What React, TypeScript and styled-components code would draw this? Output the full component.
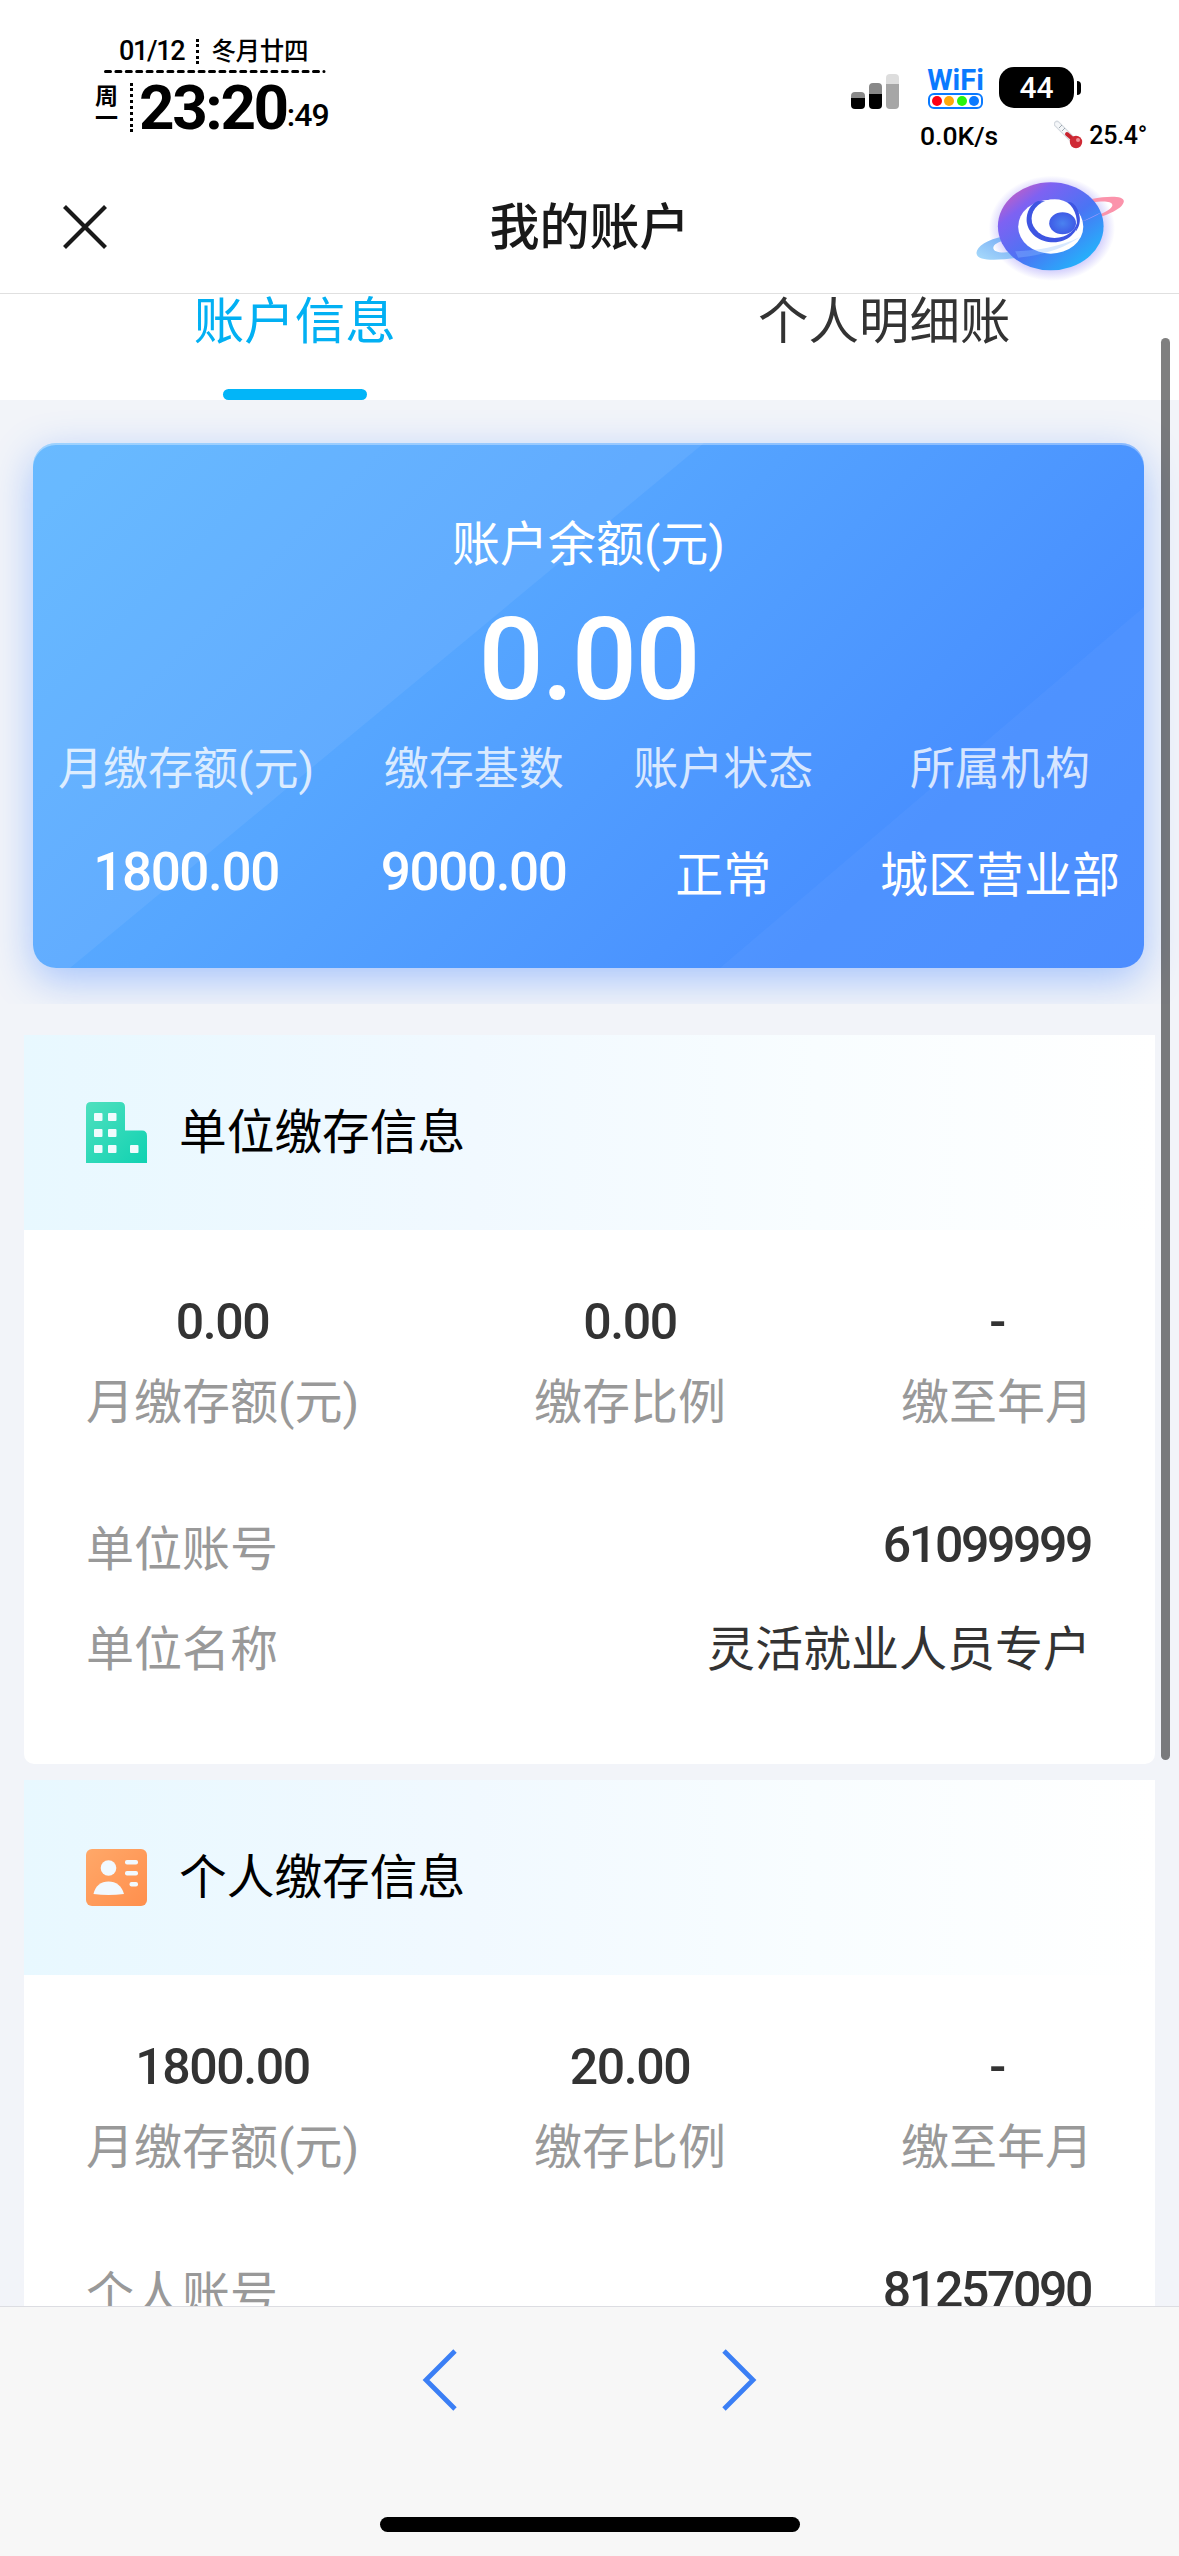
import React from 'react';
import styled, { createGlobalStyle } from 'styled-components';

const GlobalStyle = createGlobalStyle`
  *, *::before, *::after { box-sizing: border-box; }
  body { margin: 0; background: #f2f4f9; }
`;

const Page = styled.div`
  width: 1179px;
  height: 2556px;
  display: flex;
  flex-direction: column;
  overflow: hidden;
  background: #f2f4f9;
  color: #333;
  font-family: Roboto, 'Noto Sans CJK SC', sans-serif;
  white-space: nowrap;
`;

/* ---------- status bar ---------- */

const StatusBar = styled.div`
  flex: none;
  height: 160px;
  display: flex;
  justify-content: space-between;
  align-items: flex-start;
  padding: 37px 32px 0 95px;
  background: #fff;
  color: #000;
  font-weight: 500;
`;

const ClockBlock = styled.div`
  display: flex;
  flex-direction: column;
`;

const DateRow = styled.div`
  display: flex;
  align-items: center;
  gap: 12px;
  height: 28px;
  padding-left: 24px;
  font-size: 27px;
  letter-spacing: -1.3px;
`;

const Lunar = styled.span`
  font-size: 24.5px;
  line-height: 28px;
  letter-spacing: -0.3px;
  padding-top: 1px;
`;

const DottedRule = styled.i<{ $height: number }>`
  width: 0;
  height: ${(p) => p.$height}px;
  border-left: 3px dotted #000;
`;

const DashedRule = styled.svg`
  display: block;
  width: 222px;
  height: 3px;
  margin: 5px 0 0 9px;
`;

const TimeRow = styled.div`
  display: flex;
  align-items: center;
  margin-top: 9px;
  height: 50px;
`;

const Weekday = styled.div`
  width: 23px;
  margin: 2px 12px 0 0;
  font-size: 23px;
  line-height: 22px;
  font-weight: 700;
  white-space: normal;
`;

const Time = styled.span`
  margin-left: 6px;
  font-size: 62px;
  line-height: 50px;
  padding-top: 2px;
  font-weight: 700;
  letter-spacing: -2.4px;
`;

const Seconds = styled.span`
  align-self: flex-end;
  font-size: 32px;
  line-height: 34px;
  letter-spacing: -0.9px;
`;

const Indicators = styled.div`
  display: flex;
  flex-direction: column;
  width: 296px;
  padding-top: 30px;
`;

const IndicatorRow = styled.div`
  display: flex;
  align-items: flex-end;
  height: 42px;
`;

const SignalIcon = styled.svg`
  display: block;
  width: 49px;
  height: 35px;
  margin-right: 28px;
`;

const WifiBadge = styled.div`
  display: flex;
  flex-direction: column;
  align-items: center;
  width: 55px;
  color: #0a7aff;
  font-size: 29px;
  line-height: 26px;
  font-weight: 700;
`;

const WifiDots = styled.div`
  display: flex;
  align-items: center;
  justify-content: space-evenly;
  width: 55px;
  height: 16px;
  border: 2px solid #0a7aff;
  border-radius: 6px;
`;

const Dot = styled.i<{ $color: string }>`
  width: 10px;
  height: 10px;
  border-radius: 50%;
  background: ${(p) => p.$color};
`;

const Battery = styled.div`
  display: flex;
  align-items: center;
  justify-content: center;
  width: 75px;
  height: 41px;
  margin: 0 3px 1px 16px;
  border-radius: 15px;
  background: #000;
  color: #fff;
  font-size: 30px;
`;

const BatteryTip = styled.i`
  width: 4px;
  height: 14px;
  margin-bottom: 14px;
  border-radius: 0 4px 4px 0;
  background: #000;
`;

const ReadoutRow = styled.div`
  display: flex;
  align-items: center;
  justify-content: space-between;
  height: 30px;
  margin-top: 11px;
  padding-left: 69px;
  font-size: 26.5px;
`;

const Temperature = styled.span`
  display: flex;
  align-items: center;
  gap: 5px;
  font-size: 25px;
  letter-spacing: -0.3px;
`;

/* ---------- navigation bar ---------- */

const NavBar = styled.header`
  flex: none;
  display: grid;
  grid-template-columns: 300px 1fr 300px;
  align-items: center;
  height: 134px;
  border-bottom: 1px solid #e0e0e0;
  background: #fff;
`;

const CloseButton = styled.button`
  display: flex;
  width: 46px;
  height: 46px;
  margin: 0 0 0 62px;
  padding: 0;
  border: 0;
  background: none;
`;

const NavTitle = styled.h1`
  margin: 2px 0 0;
  text-align: center;
  color: #191919;
  font-size: 50px;
  line-height: 60px;
  font-weight: 500;
`;

const PlanetLogo = styled.svg`
  justify-self: end;
  width: 157px;
  height: 110px;
  margin: 2px 49px 0 0;
`;

/* ---------- scrolling content ---------- */

const Content = styled.main`
  flex: 1;
  min-height: 0;
  position: relative;
  overflow: hidden;
`;

const Tabs = styled.nav`
  display: grid;
  grid-template-columns: 1fr 1fr;
  height: 106px;
  background: #fff;
`;

const Tab = styled.div<{ $active?: boolean }>`
  display: flex;
  flex-direction: column;
  align-items: center;
  justify-content: space-between;
  color: ${(p) => (p.$active ? '#02b0f3' : '#333')};
  font-size: 50.5px;
  line-height: 55px;

  &::after {
    content: '';
    width: 144px;
    height: 11px;
    border-radius: 6px;
    background: ${(p) => (p.$active ? '#02b5f8' : 'transparent')};
  }
`;

const CardStage = styled.section`
  height: 604px;
  padding: 43px 35px 0 33px;
  overflow: hidden;
`;

const BalanceCard = styled.div`
  position: relative;
  display: flex;
  flex-direction: column;
  align-items: center;
  height: 525px;
  padding-top: 74px;
  border-radius: 23px;
  background: linear-gradient(135deg, #5fb6ff 0%, #56a6ff 38%, #488fff 78%, #4689ff 100%);
  box-shadow: 0 12px 40px rgba(60, 128, 255, 0.42), inset 0 2px 0 rgba(255, 255, 255, 0.35);
  color: #fff;

  &::before,
  &::after {
    content: '';
    position: absolute;
    inset: 0;
    border-radius: 23px;
    background: rgba(255, 255, 255, 0.065);
    clip-path: polygon(0 0, 671px 0, 37px 525px, 0 525px);
  }
  &::after {
    background: rgba(255, 255, 255, 0.035);
    clip-path: polygon(100% 164px, 100% 100%, 687px 100%);
  }
`;

const BalanceLabel = styled.div`
  font-size: 48px;
  line-height: 56px;
`;

const BalanceValue = styled.div`
  margin-top: 32px;
  font-size: 115px;
  line-height: 110px;
  font-weight: 500;
  letter-spacing: -2px;
`;

const Facts = styled.div`
  display: flex;
  justify-content: space-between;
  align-self: stretch;
  margin-top: 27px;
  padding: 0 24px 0 25px;
`;

const Fact = styled.div`
  display: flex;
  flex-direction: column;
  align-items: center;
`;

const FactLabel = styled.span`
  font-size: 45px;
  line-height: 56px;
  opacity: 0.78;
`;

const FactValue = styled.span<{ $numeric?: boolean }>`
  margin-top: ${(p) => (p.$numeric ? 44 : 48)}px;
  font-size: ${(p) => (p.$numeric ? 53 : 48)}px;
  line-height: 60px;
  font-weight: ${(p) => (p.$numeric ? 500 : 400)};
  letter-spacing: ${(p) => (p.$numeric ? -1.4 : 0)}px;
`;

const Section = styled.section`
  width: 1131px;
  height: 729px;
  margin: 31px 0 0 24px;
  border-radius: 0 0 10px 10px;
  overflow: hidden;
  background: #fff;

  & + & {
    margin-top: 16px;
  }
`;

const SectionHeader = styled.div`
  display: flex;
  align-items: center;
  gap: 32px;
  height: 195px;
  padding-left: 62px;
  background: linear-gradient(90deg, #e8f8ff 0%, #f1f9ff 40%, #f8fdff 70%, #fff 100%);
`;

const SectionIcon = styled.svg`
  width: 61px;
  height: 62px;
`;

const SectionTitle = styled.h2`
  margin: 0;
  color: #000;
  font-size: 47.7px;
  line-height: 60px;
  font-weight: 400;
`;

const Stats = styled.div`
  display: flex;
  justify-content: space-between;
  padding: 62px 62px 0;
`;

const Stat = styled.div`
  display: flex;
  flex-direction: column;
  align-items: center;
`;

const StatValue = styled.span`
  color: #333;
  font-size: 50px;
  line-height: 60px;
  font-weight: 500;
  letter-spacing: -1.4px;
`;

const Caption = styled.span`
  color: #999;
  font-size: 48px;
  line-height: 60px;
`;

const StatCaption = styled(Caption)`
  margin-top: 21px;
`;

const Details = styled.dl`
  margin: 87px 64px 0 62px;
`;

const DetailRow = styled.div`
  display: flex;
  justify-content: space-between;
  height: 100px;
`;

const DetailValue = styled.span<{ $numeric?: boolean }>`
  font-size: ${(p) => (p.$numeric ? 50 : 48)}px;
  line-height: ${(p) => (p.$numeric ? 50 : 60)}px;
  font-weight: ${(p) => (p.$numeric ? 500 : 400)};
  letter-spacing: ${(p) => (p.$numeric ? -2.4 : 0)}px;
`;

const ScrollThumb = styled.div`
  position: absolute;
  top: 44px;
  right: 9px;
  width: 9px;
  height: 1422px;
  border-radius: 5px;
  background: rgba(0, 0, 0, 0.5);
`;

/* ---------- browser toolbar ---------- */

const Toolbar = styled.footer`
  flex: none;
  display: flex;
  flex-direction: column;
  align-items: center;
  justify-content: space-between;
  height: 250px;
  padding: 42px 0 24px;
  border-top: 1px solid #dcdde2;
  background: #f7f7f7;
`;

const Arrows = styled.div`
  display: flex;
  gap: 262px;
`;

const Arrow = styled.svg`
  width: 38px;
  height: 62px;
`;

const HomeIndicator = styled.div`
  width: 420px;
  height: 15px;
  border-radius: 8px;
  background: #000;
`;

const Planet = () => (
  <PlanetLogo viewBox="1030 70 410 330" preserveAspectRatio="none">
    <defs>
      <linearGradient id="body" x1="0.1" y1="0.1" x2="0.85" y2="0.9">
        <stop offset="0" stopColor="#c35fc4" />
        <stop offset="0.2" stopColor="#7e62f2" />
        <stop offset="0.58" stopColor="#4a74f4" />
        <stop offset="1" stopColor="#23b4fb" />
      </linearGradient>
      <linearGradient id="ringLeft" x1="1" y1="0" x2="0" y2="1">
        <stop offset="0" stopColor="#6fa4f4" />
        <stop offset="1" stopColor="#a9dcfb" />
      </linearGradient>
      <radialGradient id="core">
        <stop offset="0" stopColor="#4a82f0" />
        <stop offset="1" stopColor="#3f5be6" />
      </radialGradient>
      <radialGradient id="glow">
        <stop offset="0.8" stopColor="#6a5cf5" stopOpacity="0.28" />
        <stop offset="1" stopColor="#6a5cf5" stopOpacity="0" />
      </radialGradient>
    </defs>
    <ellipse cx="1236" cy="236" rx="165" ry="158" fill="url(#glow)" />
    <path
      d="M1110 260 C1068 270 1040 290 1039 310 C1040 334 1085 334 1150 324 L1140 305 C1105 312 1083 308 1083 294 C1084 284 1096 278 1112 272 Z"
      fill="url(#ringLeft)"
    />
    <path
      d="M1340 148 C1385 138 1424 138 1424 155 C1422 180 1370 204 1310 217 C1360 198 1394 180 1394 166 C1392 154 1370 154 1342 158 Z"
      fill="#fb93ab"
    />
    <ellipse cx="1233" cy="230" rx="138" ry="132" fill="url(#body)" />
    <ellipse cx="1233" cy="231" rx="85" ry="81" fill="#fff" />
    <path
      d="M1200 154 C1180 162 1169 188 1170 214 C1173 252 1204 278 1240 278 C1278 277 1304 248 1307 210 C1308 186 1300 166 1286 158 Z"
      fill="#3e55e2"
    />
    <ellipse cx="1243" cy="207" rx="60" ry="58" fill="#fff" />
    <path d="M1276 156 C1312 172 1318 218 1298 246 C1306 214 1300 180 1276 156 Z" fill="#3e55e2" />
    <ellipse cx="1264" cy="221" rx="35" ry="33" fill="url(#core)" />
    <path d="M1140 305 C1200 302 1255 292 1310 262 C1262 300 1205 318 1148 324 Z" fill="#8fc0ff" opacity="0.35" />
    <path d="M1368 186 C1350 200 1330 210 1310 217 C1330 208 1350 196 1368 186 Z" fill="#b99cff" opacity="0.8" />
  </PlanetLogo>
);

const BuildingIcon = () => (
  <SectionIcon viewBox="0 0 61 62">
    <defs>
      <linearGradient id="green" x1="0" y1="0" x2="1" y2="1">
        <stop offset="0" stopColor="#4fe0be" />
        <stop offset="1" stopColor="#10d2b2" />
      </linearGradient>
    </defs>
    <path d="M0 61 V5 Q0 0 5 0 H34 Q39 0 39 5 V28.5 H56 Q61 28.5 61 34 V61 Z" fill="url(#green)" />
    {[
      [8, 11],
      [22, 11],
      [8, 27],
      [22, 27],
      [8, 43],
      [22, 43],
      [44, 43],
    ].map(([x, y]) => (
      <rect key={`${x}-${y}`} x={x} y={y} width="8.5" height="8" rx="1" fill="#f0fbfd" />
    ))}
  </SectionIcon>
);

const PersonIcon = () => (
  <SectionIcon viewBox="0 0 61 62">
    <defs>
      <linearGradient id="orange" x1="0" y1="0" x2="1" y2="1">
        <stop offset="0" stopColor="#ffa869" />
        <stop offset="1" stopColor="#ff8f4d" />
      </linearGradient>
    </defs>
    <rect y="2" width="61" height="57" rx="6" fill="url(#orange)" />
    <ellipse cx="22.5" cy="21" rx="7.8" ry="7.8" fill="#f1f9ff" />
    <path d="M7.5 47 C9 39 15 34.5 22.5 34.5 C30 34.5 36 39 38 47 Q30 48 22.5 48 T7.5 47 Z" fill="#f1f9ff" />
    <rect x="39" y="13" width="13" height="4.6" rx="2" fill="#f1f9ff" />
    <rect x="39" y="24" width="13" height="4.6" rx="2" fill="#f1f9ff" />
    <rect x="43.5" y="35" width="8.5" height="4.6" rx="2" fill="#f1f9ff" />
  </SectionIcon>
);

const Thermometer = () => (
  <svg width="30" height="30" viewBox="0 0 30 30">
    <path d="M3 4 L19 20" stroke="#d4d9df" strokeWidth="6.5" strokeLinecap="round" />
    <path d="M3 4 L19 20" stroke="#f5f7f9" strokeWidth="4" strokeLinecap="round" />
    <path d="M5 8 l3 -3 M8 11 l3 -3" stroke="#8a95a0" strokeWidth="0.8" />
    <path d="M13 14 L21 21" stroke="#c8232e" strokeWidth="4" strokeLinecap="round" />
    <circle cx="22" cy="22" r="6.2" fill="#cf2a35" />
    <circle cx="24" cy="20" r="2" fill="#f08f94" />
  </svg>
);

const facts = [
  { label: '月缴存额(元)', value: '1800.00', numeric: true },
  { label: '缴存基数', value: '9000.00', numeric: true },
  { label: '账户状态', value: '正常' },
  { label: '所属机构', value: '城区营业部' },
];

const sections = [
  {
    title: '单位缴存信息',
    Icon: BuildingIcon,
    stats: [
      ['0.00', '月缴存额(元)'],
      ['0.00', '缴存比例'],
      ['-', '缴至年月'],
    ],
    details: [
      { label: '单位账号', value: '61099999', numeric: true },
      { label: '单位名称', value: '灵活就业人员专户' },
    ],
  },
  {
    title: '个人缴存信息',
    Icon: PersonIcon,
    stats: [
      ['1800.00', '月缴存额(元)'],
      ['20.00', '缴存比例'],
      ['-', '缴至年月'],
    ],
    details: [{ label: '个人账号', value: '81257090', numeric: true }],
  },
];

export default function App() {
  return (
    <Page>
      <GlobalStyle />
      <StatusBar>
        <ClockBlock>
          <DateRow>
            <span>01/12</span>
            <DottedRule $height={25} />
            <Lunar>冬月廿四</Lunar>
          </DateRow>
          <DashedRule viewBox="0 0 222 3">
            <path d="M1.5 1.5 H220" stroke="#000" strokeWidth="3" strokeLinecap="round" strokeDasharray="5 5.4" />
          </DashedRule>
          <TimeRow>
            <Weekday>周一</Weekday>
            <DottedRule $height={49} />
            <Time>23:20</Time>
            <Seconds>:49</Seconds>
          </TimeRow>
        </ClockBlock>
        <Indicators>
          <IndicatorRow>
            <SignalIcon viewBox="0 0 49 35">
              <path d="M0 24 V22 Q0 18 4 18 H10 Q14 18 14 22 V24 Z" fill="#888" />
              <path d="M0 24 H14 V31 Q14 35 10 35 H4 Q0 35 0 31 Z" />
              <path d="M18 20 V13 Q18 9 22 9 H27 Q31 9 31 13 V20 Z" fill="#888" />
              <path d="M18 20 H31 V31 Q31 35 27 35 H22 Q18 35 18 31 Z" />
              <path d="M35 10 V4 Q35 0 39 0 H44 Q48 0 48 4 V10 Z" fill="#ddd" />
              <path d="M35 10 H48 V31 Q48 35 44 35 H39 Q35 35 35 31 Z" fill="#a6a6a6" />
            </SignalIcon>
            <WifiBadge>
              WiFi
              <WifiDots>
                <Dot $color="#ff0013" />
                <Dot $color="#ffa90a" />
                <Dot $color="#27f50c" />
                <Dot $color="#0a7aff" />
              </WifiDots>
            </WifiBadge>
            <Battery>44</Battery>
            <BatteryTip />
          </IndicatorRow>
          <ReadoutRow>
            <span>0.0K/s</span>
            <Temperature>
              <Thermometer />
              25.4°
            </Temperature>
          </ReadoutRow>
        </Indicators>
      </StatusBar>

      <NavBar>
        <CloseButton aria-label="关闭">
          <svg width="46" height="46" viewBox="0 0 46 46">
            <path d="M2.5 2.5 L43.5 43.5 M43.5 2.5 L2.5 43.5" stroke="#191919" strokeWidth="4.2" />
          </svg>
        </CloseButton>
        <NavTitle>我的账户</NavTitle>
        <Planet />
      </NavBar>

      <Content>
        <Tabs>
          <Tab $active>账户信息</Tab>
          <Tab>个人明细账</Tab>
        </Tabs>
        <CardStage>
          <BalanceCard>
            <BalanceLabel>账户余额(元)</BalanceLabel>
            <BalanceValue>0.00</BalanceValue>
            <Facts>
              {facts.map((f) => (
                <Fact key={f.label}>
                  <FactLabel>{f.label}</FactLabel>
                  <FactValue $numeric={f.numeric}>{f.value}</FactValue>
                </Fact>
              ))}
            </Facts>
          </BalanceCard>
        </CardStage>
        {sections.map(({ title, Icon, stats, details }) => (
          <Section key={title}>
            <SectionHeader>
              <Icon />
              <SectionTitle>{title}</SectionTitle>
            </SectionHeader>
            <Stats>
              {stats.map(([value, label]) => (
                <Stat key={label}>
                  <StatValue>{value}</StatValue>
                  <StatCaption>{label}</StatCaption>
                </Stat>
              ))}
            </Stats>
            <Details>
              {details.map((d) => (
                <DetailRow key={d.label}>
                  <Caption>{d.label}</Caption>
                  <DetailValue $numeric={d.numeric}>{d.value}</DetailValue>
                </DetailRow>
              ))}
            </Details>
          </Section>
        ))}
        <ScrollThumb />
      </Content>

      <Toolbar>
        <Arrows>
          <Arrow viewBox="0 0 38 62">
            <path d="M34 2 L5 31 L34 60" fill="none" stroke="#3b7ff5" strokeWidth="4.8" />
          </Arrow>
          <Arrow viewBox="0 0 38 62">
            <path d="M3 2 L32 31 L3 60" fill="none" stroke="#3b7ff5" strokeWidth="4.8" />
          </Arrow>
        </Arrows>
        <HomeIndicator />
      </Toolbar>
    </Page>
  );
}
